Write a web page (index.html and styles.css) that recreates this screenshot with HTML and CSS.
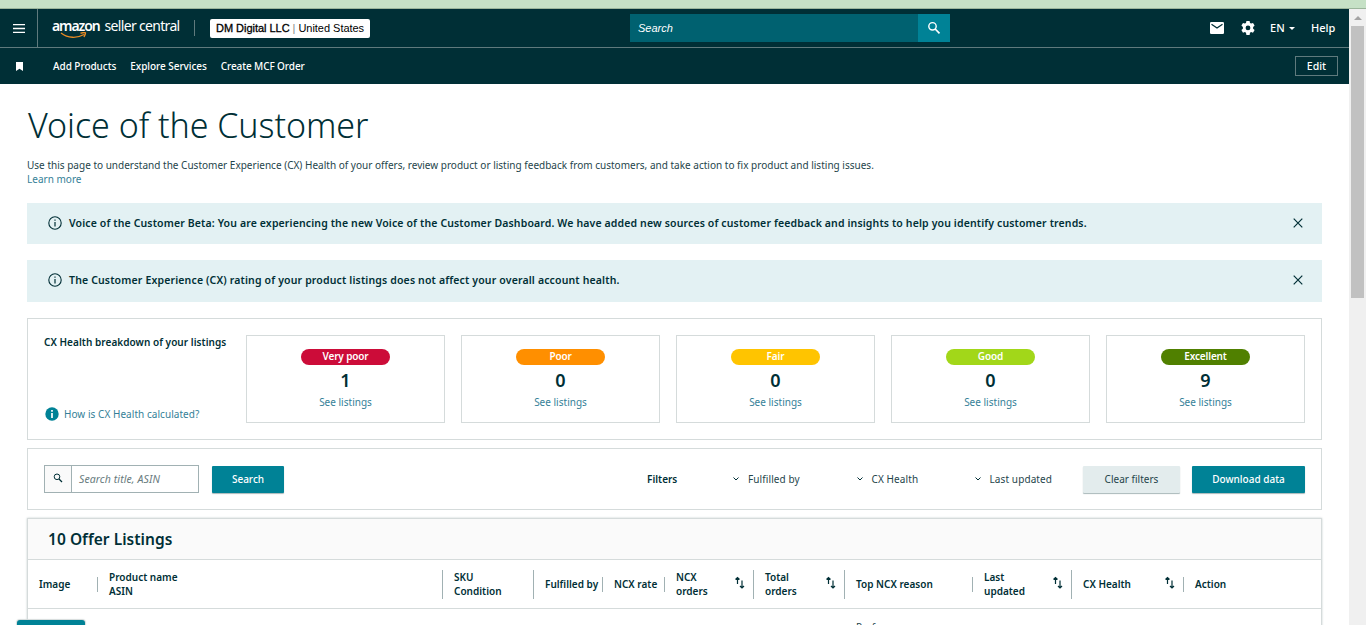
FILE: index.html
```html
<!DOCTYPE html>
<html lang="en">
<head>
    <meta charset="UTF-8">
    <meta name="viewport" content="width=device-width, initial-scale=1.0">
    <title>Voice of the Customer</title>
    <link rel="stylesheet" href="styles.css">
</head>
<body>
    <div class="top-strip"></div>
    <div class="window">
        <div class="page">
            <header>
                <div class="navbar">
                    <div class="menu">
                        <svg width="12" height="9" viewBox="0 0 12 9"><path d="M0 .5h12M0 4.5h12M0 8.5h12" stroke="#fff" stroke-width="1.3"/></svg>
                    </div>
                    <div class="logo">
                        <div class="logo-text"><b>amazon</b><span>seller central</span></div>
                        <svg class="smile" width="28" height="7" viewBox="0 0 28 7"><path d="M1 1C8 6.500 17 6.500 24 2.500M20.500 1.200Q25.500 0 25.500 1T24 5" fill="none" stroke="#e98b24" stroke-width="1.400"/></svg>
                    </div>
                    <div class="account"><b>DM Digital LLC</b> <i>|</i> United States</div>
                    <div class="nav-search">
                        <div class="nav-input">Search</div>
                        <div class="nav-go">
                            <svg width="14" height="14" viewBox="0 0 14 14" fill="none" stroke="#fff"><circle cx="5.500" cy="5.300" r="3.700" stroke-width="1.400"/><path d="M8.200 8l4.300 4.300" stroke-width="1.700"/></svg>
                        </div>
                    </div>
                    <div class="nav-right">
                        <svg class="mail" width="14" height="12" viewBox="0 0 14 12"><rect width="14" height="12" rx="1.300" fill="#fff"/><path d="M1.500 2.300L7 6l5.500-3.700" fill="none" stroke="#002f36" stroke-width="1.300"/></svg>
                        <svg class="gear" width="14" height="14" viewBox="0 0 14 14"><path fill="#fff" fill-rule="evenodd" d="M5.400 0h3.200l.4 2 1.100.6 1.900-.7 1.600 2.700-1.500 1.300v1.800l1.500 1.400-1.600 2.700-1.900-.7-1.100.6-.4 2.300H5.400L5 11.700l-1.100-.6-1.900.7L.4 9.100l1.500-1.400V5.900L.4 4.600 2 1.900l1.900.7L5 2zM7 4.500a2.400 2.400 0 1 0 0 4.800 2.400 2.400 0 0 0 0-4.800z"/></svg>
                        <span class="lang">EN</span>
                        <span class="caret"></span>
                        <span class="help">Help</span>
                    </div>
                </div>
                <div class="subnav">
                    <svg class="bookmark" width="7" height="9" viewBox="0 0 7 9"><path d="M0 0h7v9L3.500 6.800 0 9z" fill="#fff"/></svg>
                    <span class="link-1">Add Products</span>
                    <span class="link-2">Explore Services</span>
                    <span class="link-3">Create MCF Order</span>
                    <div class="edit">Edit</div>
                </div>
            </header>

            <main>
                <h1>Voice of the Customer</h1>
                <p class="intro">Use this page to understand the Customer Experience (CX) Health of your offers, review product or listing feedback from customers, and take action to fix product and listing issues.</p>
                <a class="learn">Learn more</a>

                <div class="alert alert-beta">
                    <svg width="14" height="14" viewBox="0 0 14 14"><circle cx="7" cy="7" r="6.200" fill="none" stroke="#002f36" stroke-width="1.100"/><path d="M7 3.500v1.300M7 6v4.500" stroke="#002f36" stroke-width="1.200"/></svg>
                    <span class="beta-text">Voice of the Customer Beta: You are experiencing the new Voice of the Customer Dashboard. We have added new sources of customer feedback and insights to help you identify customer trends.</span>
                    <svg class="close" width="10" height="10" viewBox="0 0 10 10"><path d="M.7.7l8.600 8.600M9.300.7L.7 9.300" stroke="#002f36" stroke-width="1.200"/></svg>
                </div>
                <div class="alert alert-rating">
                    <svg width="14" height="14" viewBox="0 0 14 14"><circle cx="7" cy="7" r="6.200" fill="none" stroke="#002f36" stroke-width="1.100"/><path d="M7 3.500v1.300M7 6v4.500" stroke="#002f36" stroke-width="1.200"/></svg>
                    <span class="rating-text">The Customer Experience (CX) rating of your product listings does not affect your overall account health.</span>
                    <svg class="close" width="10" height="10" viewBox="0 0 10 10"><path d="M.7.7l8.600 8.600M9.300.7L.7 9.300" stroke="#002f36" stroke-width="1.200"/></svg>
                </div>

                <section class="health">
                    <div class="health-info">
                        <b>CX Health breakdown of your listings</b>
                        <div class="how">
                            <svg width="14" height="14" viewBox="0 0 14 14"><circle cx="7" cy="7" r="6.700" fill="#008296"/><path d="M7 3v1.700M7 6v5" stroke="#fff" stroke-width="1.700"/></svg>
                            <a>How is CX Health calculated?</a>
                        </div>
                    </div>
                    <div class="stat"><span class="pill very-poor">Very poor</span><strong>1</strong><a>See listings</a></div>
                    <div class="stat"><span class="pill poor">Poor</span><strong>0</strong><a>See listings</a></div>
                    <div class="stat"><span class="pill fair">Fair</span><strong>0</strong><a>See listings</a></div>
                    <div class="stat"><span class="pill good">Good</span><strong>0</strong><a>See listings</a></div>
                    <div class="stat"><span class="pill excellent">Excellent</span><strong>9</strong><a>See listings</a></div>
                </section>

                <section class="tools">
                    <div class="search-box">
                        <div class="search-icon">
                            <svg width="10" height="10" viewBox="0 0 10 10" fill="none" stroke="#002f36"><circle cx="4" cy="3.800" r="2.800"/><path d="M6 6l3 3" stroke-width="1.300"/></svg>
                        </div>
                        <div class="search-input">Search title, ASIN</div>
                    </div>
                    <div class="btn search-btn">Search</div>
                    <b class="filters">Filters</b>
                    <div class="filter fulfilled"><svg width="6" height="4" viewBox="0 0 6 4"><path d="M.5.5L3 3 5.500.5" fill="none" stroke="#002f36"/></svg><span>Fulfilled by</span></div>
                    <div class="filter cx"><svg width="6" height="4" viewBox="0 0 6 4"><path d="M.5.5L3 3 5.500.5" fill="none" stroke="#002f36"/></svg><span>CX Health</span></div>
                    <div class="filter updated"><svg width="6" height="4" viewBox="0 0 6 4"><path d="M.5.5L3 3 5.500.5" fill="none" stroke="#002f36"/></svg><span>Last updated</span></div>
                    <div class="btn clear">Clear filters</div>
                    <div class="btn download">Download data</div>
                </section>

                <section class="listings">
                    <h2><span>10 Offer Listings</span></h2>
                    <div class="row head">
                        <div class="cell short"><span>Image</span></div>
                        <div class="cell"><span>Product name<br>ASIN</span></div>
                        <div class="cell"><span>SKU<br>Condition</span></div>
                        <div class="cell short"><span>Fulfilled by</span></div>
                        <div class="cell short"><span>NCX rate</span></div>
                        <div class="cell"><span>NCX<br>orders</span><svg class="sort" width="10" height="13" viewBox="0 0 10 13"><path d="M2.500 8V1.500M.5 3.500l2-2 2 2M7 4.500V12M5 10l2 2 2-2" fill="none" stroke="#002f36" stroke-width="1.200"/></svg></div>
                        <div class="cell"><span>Total<br>orders</span><svg class="sort" width="10" height="13" viewBox="0 0 10 13"><path d="M2.500 8V1.500M.5 3.500l2-2 2 2M7 4.500V12M5 10l2 2 2-2" fill="none" stroke="#002f36" stroke-width="1.200"/></svg></div>
                        <div class="cell short"><span>Top NCX reason</span></div>
                        <div class="cell"><span>Last<br>updated</span><svg class="sort" width="10" height="13" viewBox="0 0 10 13"><path d="M2.500 8V1.500M.5 3.500l2-2 2 2M7 4.500V12M5 10l2 2 2-2" fill="none" stroke="#002f36" stroke-width="1.200"/></svg></div>
                        <div class="cell short"><span class="cx-head">CX Health</span><svg class="sort" width="10" height="13" viewBox="0 0 10 13"><path d="M2.500 8V1.500M.5 3.500l2-2 2 2M7 4.500V12M5 10l2 2 2-2" fill="none" stroke="#002f36" stroke-width="1.200"/></svg></div>
                        <div class="cell short last"><span>Action</span></div>
                    </div>
                    <div class="row offer">
                        <div class="reason">Performance or</div>
                    </div>
                </section>
            </main>
            <div class="feedback"></div>
        </div>
        <div class="scrollbar">
            <div class="arrow"></div>
            <div class="thumb"></div>
        </div>
    </div>
</body>
</html>
```
FILE: styles.css
```css
* {
    box-sizing: border-box;
}
body {
    margin: 0;
    height: 625px;
    overflow: hidden;
    background: #fff;
    color: #002f36;
    font-family: "Noto Sans", "Open Sans", sans-serif;
    font-size: 10px;
    letter-spacing: 0.01px;
    line-height: 14px;
    white-space: nowrap;
}
svg {
    display: block;
    flex: none;
}
a {
    color: #357f98;
}
b, h2, strong {
    font-weight: 600;
}
.top-strip {
    height: 9px;
    background: #c6e1c6;
    border-bottom: 1px solid #9bb59b;
}
.window {
    display: flex;
    height: 616px;
}
.page {
    position: relative;
    width: 1349px;
    overflow: hidden;
}
header {
    background: #002f36;
    color: #fff;
    font-weight: 500;
}
.navbar {
    display: flex;
    align-items: center;
    height: 39px;
    border-bottom: 1px solid #5f7a7d;
}
.menu {
    display: flex;
    align-items: center;
    width: 38px;
    height: 38px;
    padding-left: 13px;
    border-right: 1px solid #5f7a7d;
}
.logo {
    position: relative;
    width: 143px;
    height: 16px;
    margin-left: 14px;
    border-right: 1px solid #5f7a7d;
}
.logo-text {
    display: flex;
    gap: 5px;
    margin-top: -1px;
    font-size: 14px;
    font-weight: 400;
    letter-spacing: -0.68px;
}
.logo-text b {
    font-weight: 600;
    letter-spacing: -1.1px;
}
.smile {
    position: absolute;
    left: 8px;
    top: 12px;
}
.account {
    width: 160px;
    height: 19px;
    margin-left: 15px;
    padding-left: 6px;
    border-radius: 2px;
    background: #fff;
    color: #000;
    font: 11px/19px "Liberation Sans", Arial, sans-serif;
    letter-spacing: -0.03px;
}
.account b {
    font-weight: 400;
    -webkit-text-stroke: 0.3px #000;
}
.account i {
    color: #888;
    font-style: normal;
}
.nav-search {
    display: flex;
    width: 320px;
    height: 28px;
    margin-left: 260px;
}
.nav-input {
    width: 288px;
    padding-left: 8px;
    background: #006170;
    font: italic 11px/28px "Liberation Sans", Arial, sans-serif;
}
.nav-go {
    display: flex;
    align-items: center;
    justify-content: center;
    width: 32px;
    background: #008296;
}
.nav-right {
    display: flex;
    align-items: center;
    margin-left: 260px;
    font-size: 11px;
}
.gear {
    margin-left: 17px;
}
.lang {
    width: 14px;
    margin-left: 15px;
}
.caret {
    margin-left: 5px;
    border: 3.5px solid transparent;
    border-top-color: #fff;
    border-bottom: 0;
}
.help {
    margin-left: 16px;
}
.subnav {
    display: flex;
    align-items: center;
    height: 36px;
    padding: 0 11px 0 16px;
}
.link-1 {
    margin-left: 30px;
}
.link-2, .link-3 {
    margin-left: 14px;
}
.link-2, .link-1 {
    letter-spacing: -0.05px;
}
.link-3 {
    letter-spacing: -0.1px;
}
.edit {
    width: 43px;
    height: 20px;
    margin-left: auto;
    border: 1px solid #5f7a7d;
    font-size: 10.5px;
    text-align: center;
    line-height: 18px;
}
main {
    padding: 20px 27px 0;
}
h1 {
    height: 42px;
    margin: 0 0 12px;
    padding-left: 1px;
    font-size: 34px;
    font-weight: 300;
    letter-spacing: -0.04px;
    line-height: 43px;
}
.intro {
    height: 14px;
    margin: 0;
    color: #25454b;
}
.learn {
    display: block;
    margin-bottom: 17px;
}
.alert {
    display: flex;
    align-items: center;
    height: 41px;
    margin-bottom: 16px;
    padding: 0 19px 2px 21px;
    background: #e3f1f3;
    font-size: 10.5px;
    font-weight: 600;
    letter-spacing: 0.135px;
}
.alert span {
    margin-left: 7px;
}
.alert-rating {
    height: 42px;
    letter-spacing: 0.155px;
}
.close {
    margin-left: auto;
}
.health {
    display: flex;
    gap: 16px;
    height: 122px;
    padding: 16px;
    border: 1px solid #d5dbdb;
}
.health-info {
    width: 186px;
    height: 88px;
    display: flex;
    flex-direction: column;
    justify-content: space-between;
    letter-spacing: 0.05px;
}
.how {
    display: flex;
    gap: 5px;
    margin-bottom: 2px;
    padding-left: 1px;
}
.stat {
    display: flex;
    flex-direction: column;
    align-items: center;
    width: 199px;
    height: 88px;
    padding-top: 13px;
    border: 1px solid #d5dbdb;
}
.pill {
    width: 89px;
    height: 16px;
    border-radius: 8px;
    color: #fff;
    font-size: 10px;
    font-weight: 600;
    letter-spacing: -0.15px;
    line-height: 15px;
    text-align: center;
}
.very-poor {
    background: #cc0c39;
}
.poor {
    background: #ff8f00;
}
.fair {
    background: #ffc400;
}
.good {
    background: #a2d719;
}
.excellent {
    background: #508000;
}
.stat strong {
    margin: 5px 0;
    font-size: 18px;
    line-height: 20px;
}
.tools {
    display: flex;
    align-items: center;
    height: 62px;
    margin-top: 8px;
    padding: 0 16px;
    border: 1px solid #d5dbdb;
}
.search-box {
    display: flex;
    width: 155px;
    height: 28px;
    border: 1px solid #a1b1b3;
}
.search-icon {
    width: 27px;
    padding: 7px 0 0 8px;
    border-right: 1px solid #a1b1b3;
    background: #fafafa;
}
.search-input {
    padding-left: 7px;
    color: #687b7e;
    font-size: 10.5px;
    font-style: italic;
    letter-spacing: 0.1px;
    line-height: 26px;
}
.btn {
    height: 27px;
    border-radius: 1px;
    background: #008296;
    color: #fff;
    box-shadow: 0 1px 1px #a9b8ba;
    font-weight: 500;
    line-height: 27px;
    text-align: center;
}
.search-btn {
    width: 72px;
    margin-left: 13px;
}
.filters {
    width: 86px;
    margin-left: 363px;
}
.filter {
    display: flex;
    align-items: center;
    gap: 9px;
    color: #25454b;
    letter-spacing: 0.1px;
}
.fulfilled {
    width: 123.5px;
}
.cx {
    width: 118px;
}
.updated {
    width: 108.5px;
}
.clear {
    width: 97px;
    background: #e3eced;
    color: #25454b;
    font-weight: 400;
}
.download {
    width: 113px;
    margin-left: 12px;
}
.listings {
    height: 120px;
    margin-top: 8px;
    border: 1px solid #d5dbdb;
    box-shadow: 0 0 2px #c5cdce;
}
h2 {
    height: 41px;
    margin: 0;
    padding-left: 20px;
    border-bottom: 1px solid #d5dbdb;
    background: #fafafa;
    font-size: 15.5px;
    letter-spacing: 0.04px;
    line-height: 41px;
}
.row {
    display: grid;
    grid-template-columns: 70px 345px 91px 69px 62px 89px 91px 128px 99px 112px 137px;
}
.head {
    align-items: center;
    height: 49px;
    border-bottom: 1px solid #d5dbdb;
    font-weight: 600;
}
.cell {
    display: flex;
    align-items: center;
    height: 29px;
    padding-left: 11px;
    border-right: 1px solid #a1b1b3;
}
.short {
    height: 15px;
}
.last {
    border: 0;
}
.sort {
    margin: -3px 8px 0 auto;
}
.reason {
    grid-column: 8;
    padding: 11px 0 0 11px;
    color: #25454b;
}
.feedback {
    position: absolute;
    left: 17px;
    bottom: 0;
    width: 68px;
    height: 5px;
    border-radius: 3px 3px 0 0;
    background: #008296;
    box-shadow: 0 0 1px 1px #d5dbdb;
}
.scrollbar {
    width: 17px;
    background: #f0f0f0;
}
.arrow {
    width: 7px;
    margin: 7px 0 6px 5px;
    border: 4px solid transparent;
    border-top: 0;
    border-bottom-color: #a3a3a3;
}
.thumb {
    width: 13px;
    height: 272px;
    margin-left: 2px;
    background: #c1c1c1;
}
```
